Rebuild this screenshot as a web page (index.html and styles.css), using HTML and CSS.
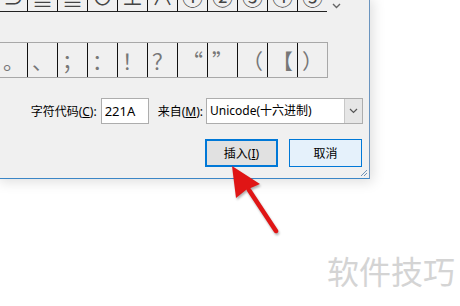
FILE: index.html
```html
<!DOCTYPE html>
<html lang="zh-CN">
<head>
  <meta charset="UTF-8">
  <title>符号</title>
  <link rel="stylesheet" href="styles.css">
</head>
<body>
  <div class="dialog">
    <div class="top-line">
      <div class="sym-row top">
        <span class="cell first">⊃</span>
        <span class="cell">≦</span>
        <span class="cell">≧</span>
        <span class="cell">⊙</span>
        <span class="cell">⊥</span>
        <span class="cell">∧</span>
        <span class="cell">①</span>
        <span class="cell">②</span>
        <span class="cell">③</span>
        <span class="cell">④</span>
        <span class="cell">⑤</span>
      </div>
      <svg class="scroll-down" width="9" height="6" viewBox="0 0 9 6">
        <path d="M1 1 L4.5 4.5 L8 1" fill="none" stroke="#666" stroke-width="1.4"/>
      </svg>
    </div>

    <!-- recently used symbols -->
    <div class="sym-row recent">
      <span class="cell first">。</span>
      <span class="cell">、</span>
      <span class="cell">；</span>
      <span class="cell">：</span>
      <span class="cell">！</span>
      <span class="cell">？</span>
      <span class="cell">“</span>
      <span class="cell">”</span>
      <span class="cell">（</span>
      <span class="cell">【</span>
      <span class="cell">）</span>
    </div>

    <div class="form-row">
      <label class="field-label" for="code">字符代码(<u>C</u>):</label>
      <input id="code" class="code-input" type="text" value="221A">
      <span class="field-label source">来自(<u>M</u>):</span>
      <div class="select">
        <span class="select-value">Unicode(十六进制)</span>
        <span class="select-btn">
          <svg width="9" height="6" viewBox="0 0 9 6">
            <path d="M1 1 L4.5 4.5 L8 1" fill="none" stroke="#555" stroke-width="1.2"/>
          </svg>
        </span>
      </div>
    </div>

    <div class="button-row">
      <button class="btn primary">插入(<u>I</u>)</button>
      <button class="btn cancel">取消</button>
    </div>

    <svg class="grip" width="8" height="8" viewBox="0 0 8 8">
      <path d="M7 1 L1 7 M7 4 L4 7" stroke="#6f93b8" stroke-width="1"/>
    </svg>
  </div>

  <svg class="arrow" width="460" height="306" viewBox="0 0 460 306">
    <line x1="249" y1="190" x2="276" y2="231" stroke="#e01515" stroke-width="4.5" stroke-linecap="round"/>
    <polygon points="232,166 236,198 246,190 260,184" fill="#e01515"/>
  </svg>

  <div class="watermark">软件技巧</div>
</body>
</html>
```

FILE: styles.css
```css
body {
  margin: 0;
  width: 460px;
  height: 306px;
  overflow: hidden;
  position: relative;
  background: #fff;
  font-family: "Noto Sans", "Noto Sans CJK SC", sans-serif;
  font-size: 12px;
  color: #000;
}

.dialog {
  position: relative;
  width: 369px;
  height: 178px;
  background: #f0f0f0;
  border-right: 1px solid #6a94bf;
  border-bottom: 1px solid #3b86c6;
  box-shadow: 1px 1px 12px 2px rgba(0, 0, 0, 0.13);
}

.top-line {
  display: flex;
  align-items: flex-start;
}

.sym-row {
  display: flex;
  width: 327px;
  font-family: "Noto Sans CJK SC", sans-serif;
}

.sym-row .cell {
  width: 29px;
  flex: none;
  text-align: center;
  border-left: 1px solid #111;
}

.sym-row .cell.first {
  width: 27px;
  border-left: none;
}

.sym-row.top {
  height: 11px;
  overflow: hidden;
  align-items: flex-end;
  border-bottom: 1px solid #222;
}

.sym-row.top .cell {
  height: 22px;
  line-height: 14px;
  font-size: 21px;
  color: #444;
}

.scroll-down {
  margin: 3px 0 0 5px;
}

.sym-row.recent {
  margin-top: 30px;
  height: 34px;
  border-top: 1px solid #a8a8a8;
  border-bottom: 1px solid #a8a8a8;
  border-right: 1px solid #a8a8a8;
}

.sym-row.recent .cell {
  height: 34px;
  line-height: 34px;
  font-size: 21px;
  color: #777;
}

.form-row {
  margin-top: 20px;
  height: 26px;
  display: flex;
  align-items: center;
  justify-content: flex-end;
  padding-right: 6px;
}

.field-label {
  margin-right: 4px;
}

.field-label.source {
  margin-left: 9px;
  margin-right: 3px;
}

.code-input {
  box-sizing: border-box;
  width: 48px;
  height: 26px;
  margin: 0;
  padding: 0 0 0 3px;
  border: 1px solid #adadad;
  background: #fff;
  font-family: "Noto Sans", sans-serif;
  font-size: 13px;
  color: #000;
}

.select {
  box-sizing: border-box;
  width: 157px;
  height: 26px;
  display: flex;
  border: 1px solid #adadad;
  background: #fff;
}

.select-value {
  flex: 1;
  padding-left: 3px;
  line-height: 24px;
}

.select-btn {
  width: 17px;
  display: flex;
  align-items: center;
  justify-content: center;
  background: #e6e6e6;
  border-left: 1px solid #c8c8c8;
}

.button-row {
  margin-top: 15px;
  display: flex;
  justify-content: flex-end;
  gap: 11px;
  padding-right: 7px;
}

.btn {
  box-sizing: border-box;
  width: 73px;
  height: 28px;
  padding: 0;
  font-family: "Noto Sans", "Noto Sans CJK SC", sans-serif;
  font-size: 12px;
  color: #000;
}

.btn.primary {
  border: 2px solid #0078d7;
  background: #e1e1e1;
}

.btn.cancel {
  border: 1px solid #0078d7;
  background: #e5f1fb;
}

.grip {
  position: absolute;
  right: 1px;
  bottom: 1px;
}

.arrow {
  position: absolute;
  left: 0;
  top: 0;
  pointer-events: none;
  filter: drop-shadow(1px 2px 1px rgba(0, 0, 0, 0.3));
}

.watermark {
  position: absolute;
  left: 327px;
  top: 254px;
  font-family: "Noto Sans CJK SC", sans-serif;
  font-size: 32px;
  line-height: 32px;
  color: #d4d4d4;
}
```
